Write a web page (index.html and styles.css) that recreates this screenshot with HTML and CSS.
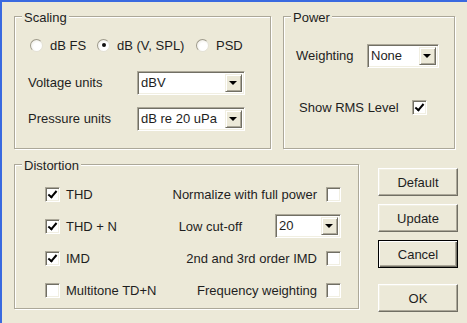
FILE: index.html
```html
<!DOCTYPE html>
<html lang="en">
<head>
    <meta charset="UTF-8">
    <title>Scaling and Distortion</title>
    <link rel="stylesheet" href="styles.css">
</head>
<body>
    <div class="dialog">
        <div class="top">
            <div class="group scaling">
                <span class="group-title">Scaling</span>
                <div class="radios">
                    <label class="radio r1"><span class="dot"></span>dB FS</label>
                    <label class="radio r2"><span class="dot on"></span>dB (V, SPL)</label>
                    <label class="radio"><span class="dot"></span>PSD</label>
                </div>
                <div class="field first">
                    <span class="field-label scale-label">Voltage units</span>
                    <div class="combo scale-combo"><span class="combo-text">dBV</span><span class="combo-btn"></span></div>
                </div>
                <div class="field">
                    <span class="field-label scale-label">Pressure units</span>
                    <div class="combo scale-combo"><span class="combo-text">dB re 20 uPa</span><span class="combo-btn"></span></div>
                </div>
            </div>

            <div class="group power">
                <span class="group-title">Power</span>
                <div class="field">
                    <span class="field-label power-label">Weighting</span>
                    <div class="combo power-combo"><span class="combo-text">None</span><span class="combo-btn"></span></div>
                </div>
                <div class="field rms">
                    <span class="field-label rms-label">Show RMS Level</span>
                    <span class="check on"></span>
                </div>
            </div>
        </div>

        <div class="bottom">
            <div class="group distortion">
                <span class="group-title">Distortion</span>
                <div class="drow">
                    <label class="check-item"><span class="check on"></span>THD</label>
                    <div class="right"><span>Normalize with full power</span><span class="check"></span></div>
                </div>
                <div class="drow">
                    <label class="check-item"><span class="check on"></span>THD + N</label>
                    <div class="right"><span class="cutoff-label">Low cut-off</span>
                        <div class="combo cutoff-combo"><span class="combo-text">20</span><span class="combo-btn"></span></div>
                    </div>
                </div>
                <div class="drow">
                    <label class="check-item"><span class="check on"></span>IMD</label>
                    <div class="right"><span>2nd and 3rd order IMD</span><span class="check"></span></div>
                </div>
                <div class="drow">
                    <label class="check-item"><span class="check"></span>Multitone TD+N</label>
                    <div class="right"><span>Frequency weighting</span><span class="check"></span></div>
                </div>
            </div>

            <div class="buttons">
                <button class="btn">Default</button>
                <button class="btn">Update</button>
                <button class="btn default">Cancel</button>
                <button class="btn ok">OK</button>
            </div>
        </div>
    </div>
</body>
</html>
```

FILE: styles.css
```css
html, body {
    margin: 0;
    height: 100%;
}
body {
    box-sizing: border-box;
    background-color: #ece9d8;
    border-top: 2px solid #3a6ae0;
    border-left: 2px solid #3a6ae0;
    font-family: "Liberation Sans", Arial, sans-serif;
    font-size: 13px;
    color: #1e1e1e;
    overflow: hidden;
}
.dialog {
    padding: 14px 0 0 12px;
}
.top {
    display: flex;
    gap: 12px;
}
.group {
    position: relative;
    box-sizing: border-box;
    border: 1px solid #aca899;
    box-shadow: 1px 1px 0 #fff, inset 1px 1px 0 #fff;
}
.group-title {
    position: absolute;
    top: -7px;
    left: 7px;
    padding: 0 2px;
    line-height: 15px;
    background-color: #ece9d8;
}
.scaling {
    width: 257px;
    height: 133px;
    padding: 20px 0 0 13px;
}
.power {
    width: 172px;
    height: 133px;
    padding: 27px 0 0 12px;
}

/* radio buttons */
.radios {
    display: flex;
    align-items: center;
    height: 16px;
    margin-left: 2px;
}
.radio {
    display: flex;
    align-items: center;
    gap: 7px;
}
.r1 { width: 67px; }
.r2 { width: 99px; }
.dot {
    position: relative;
    width: 13px;
    height: 13px;
    box-sizing: border-box;
    border-radius: 50%;
    border: 1px solid;
    border-color: #9e9b8c #e4e2d6 #e4e2d6 #9e9b8c;
    background: radial-gradient(circle at 60% 60%, #fff 40%, #e6e4da 100%);
}
.dot.on::after {
    content: "";
    position: absolute;
    left: 3.5px;
    top: 3.5px;
    width: 4px;
    height: 4px;
    border-radius: 50%;
    background-color: #111;
}

/* label + combo rows */
.field {
    display: flex;
    align-items: center;
    height: 23px;
    margin-bottom: 13px;
}
.field.first {
    margin-top: 18px;
}
.field-label {
    flex: none;
}
.scale-label { width: 109px; }
.power-label { width: 71px; }
.rms {
    margin-top: 32px;
    height: 16px;
}
.rms-label {
    width: 113px;
    padding-left: 3px;
}

.combo {
    display: flex;
    box-sizing: border-box;
    height: 24px;
    background-color: #fff;
    border: 1px solid;
    border-color: #aca899 #fff #fff #aca899;
    box-shadow: inset 1px 1px 0 #716f64, inset -1px -1px 0 #f1efe2;
    padding: 2px;
}
.scale-combo { width: 108px; }
.power-combo { width: 72px; }
.cutoff-combo { width: 66px; }
.combo-text {
    flex: 1;
    padding-left: 1px;
    line-height: 18px;
    white-space: nowrap;
    overflow: hidden;
}
.combo-btn {
    position: relative;
    width: 17px;
    box-sizing: border-box;
    background-color: #ece9d8;
    border: 1px solid;
    border-color: #f1efe2 #716f64 #716f64 #f1efe2;
    box-shadow: inset 1px 1px 0 #fff, inset -1px -1px 0 #aca899;
}
.combo-btn::after {
    content: "";
    position: absolute;
    left: 3px;
    top: 6px;
    border-left: 4px solid transparent;
    border-right: 4px solid transparent;
    border-top: 4px solid #000;
}

/* checkboxes */
.check {
    position: relative;
    flex: none;
    display: inline-block;
    width: 15px;
    height: 15px;
    box-sizing: border-box;
    background-color: #fff;
    border: 1px solid;
    border-color: #aca899 #fff #fff #aca899;
    box-shadow: inset 1px 1px 0 #716f64, inset -1px -1px 0 #f1efe2;
}
.check.on::after {
    content: "";
    position: absolute;
    left: 4px;
    top: 1px;
    width: 3px;
    height: 7px;
    border-right: 2.5px solid #000;
    border-bottom: 2.5px solid #000;
    transform: rotate(40deg);
}

/* distortion group */
.bottom {
    display: flex;
    margin-top: 15px;
}
.distortion {
    width: 345px;
    height: 145px;
    padding: 17px 17px 0 30px;
}
.drow {
    display: flex;
    align-items: center;
    justify-content: space-between;
    height: 24px;
    margin-bottom: 8px;
}
.check-item {
    display: flex;
    align-items: center;
    gap: 6px;
}
.right {
    display: flex;
    align-items: center;
    gap: 9px;
}
.cutoff-label {
    margin-right: 24px;
}

/* buttons */
.buttons {
    display: flex;
    flex-direction: column;
    gap: 8px;
    margin: 4px 0 0 19px;
}
.btn {
    width: 80px;
    height: 28px;
    box-sizing: border-box;
    font-family: inherit;
    font-size: 13px;
    color: #1e1e1e;
    background-color: #ece9d8;
    border: 1px solid;
    border-color: #fff #716f64 #716f64 #fff;
    box-shadow: inset -1px -1px 0 #aca899, inset 1px 1px 0 #f1efe2;
    padding: 0;
}
.btn.default {
    border: 1px solid #000;
    box-shadow: inset 1px 1px 0 #fff, inset -1px -1px 0 #716f64, inset -2px -2px 0 #aca899;
}
.btn.ok {
    margin-top: 8px;
}
```
